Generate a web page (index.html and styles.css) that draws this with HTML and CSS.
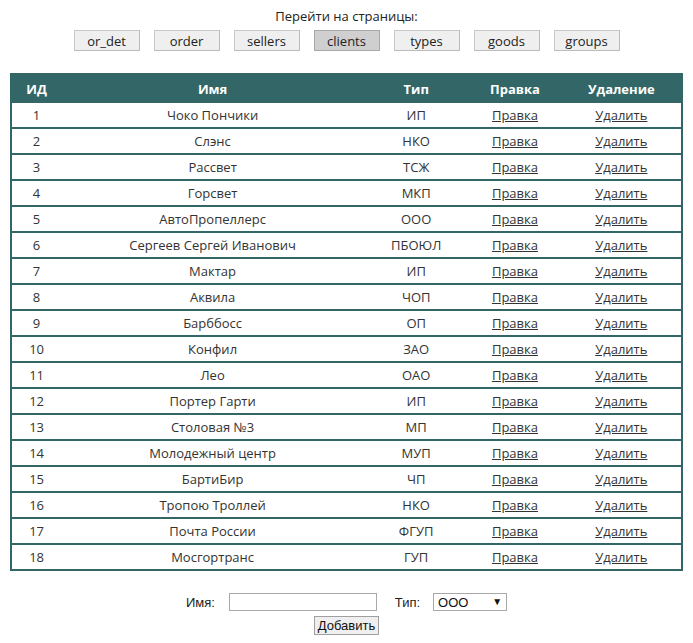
FILE: index.html
```html
<!DOCTYPE html>
<html>
<head>
<meta charset="utf-8">
<link rel="stylesheet" href="styles.css">
</head>
<body>
<div class="nav">
  <div class="nav-title">Перейти на страницы:</div>
  <div class="nav-buttons">
    <button class="nav-btn">or_det</button>
    <button class="nav-btn">order</button>
    <button class="nav-btn">sellers</button>
    <button class="nav-btn active">clients</button>
    <button class="nav-btn">types</button>
    <button class="nav-btn">goods</button>
    <button class="nav-btn">groups</button>
  </div>
</div>
<table class="grid">
  <colgroup>
    <col class="c-id"><col class="c-name"><col class="c-type"><col class="c-edit"><col class="c-del">
  </colgroup>
  <thead>
    <tr><th>ИД</th><th>Имя</th><th>Тип</th><th>Правка</th><th>Удаление</th></tr>
  </thead>
  <tbody>
    <tr><td>1</td><td>Чоко Пончики</td><td>ИП</td><td><a href="#">Правка</a></td><td><a href="#">Удалить</a></td></tr>
    <tr><td>2</td><td>Слэнс</td><td>НКО</td><td><a href="#">Правка</a></td><td><a href="#">Удалить</a></td></tr>
    <tr><td>3</td><td>Рассвет</td><td>ТСЖ</td><td><a href="#">Правка</a></td><td><a href="#">Удалить</a></td></tr>
    <tr><td>4</td><td>Горсвет</td><td>МКП</td><td><a href="#">Правка</a></td><td><a href="#">Удалить</a></td></tr>
    <tr><td>5</td><td>АвтоПропеллерс</td><td>ООО</td><td><a href="#">Правка</a></td><td><a href="#">Удалить</a></td></tr>
    <tr><td>6</td><td>Сергеев Сергей Иванович</td><td>ПБОЮЛ</td><td><a href="#">Правка</a></td><td><a href="#">Удалить</a></td></tr>
    <tr><td>7</td><td>Мактар</td><td>ИП</td><td><a href="#">Правка</a></td><td><a href="#">Удалить</a></td></tr>
    <tr><td>8</td><td>Аквила</td><td>ЧОП</td><td><a href="#">Правка</a></td><td><a href="#">Удалить</a></td></tr>
    <tr><td>9</td><td>Барббосс</td><td>ОП</td><td><a href="#">Правка</a></td><td><a href="#">Удалить</a></td></tr>
    <tr><td>10</td><td>Конфил</td><td>ЗАО</td><td><a href="#">Правка</a></td><td><a href="#">Удалить</a></td></tr>
    <tr><td>11</td><td>Лео</td><td>ОАО</td><td><a href="#">Правка</a></td><td><a href="#">Удалить</a></td></tr>
    <tr><td>12</td><td>Портер Гарти</td><td>ИП</td><td><a href="#">Правка</a></td><td><a href="#">Удалить</a></td></tr>
    <tr><td>13</td><td>Столовая №3</td><td>МП</td><td><a href="#">Правка</a></td><td><a href="#">Удалить</a></td></tr>
    <tr><td>14</td><td>Молодежный центр</td><td>МУП</td><td><a href="#">Правка</a></td><td><a href="#">Удалить</a></td></tr>
    <tr><td>15</td><td>БартиБир</td><td>ЧП</td><td><a href="#">Правка</a></td><td><a href="#">Удалить</a></td></tr>
    <tr><td>16</td><td>Тропою Троллей</td><td>НКО</td><td><a href="#">Правка</a></td><td><a href="#">Удалить</a></td></tr>
    <tr><td>17</td><td>Почта России</td><td>ФГУП</td><td><a href="#">Правка</a></td><td><a href="#">Удалить</a></td></tr>
    <tr><td>18</td><td>Мосгортранс</td><td>ГУП</td><td><a href="#">Правка</a></td><td><a href="#">Удалить</a></td></tr>
  </tbody>
</table>
<form class="add-form">
  <div class="form-row">
    <label class="lbl lbl-name">Имя:</label>
    <input class="inp" type="text">
    <label class="lbl lbl-type">Тип:</label>
    <div class="sel-wrap">
      <select class="sel"><option>ООО</option></select>
      <span class="sel-arrow">▼</span>
    </div>
  </div>
  <div class="form-submit">
    <button type="button" class="add-btn">Добавить</button>
  </div>
</form>
</body>
</html>
```
FILE: styles.css
```css
html, body {
  margin: 0;
  padding: 0;
  background: #fff;
}
body {
  font-family: "Open Sans", "Noto Sans", sans-serif;
  font-size: 13px;
  color: #333;
}
.nav {
  display: flex;
  flex-direction: column;
  align-items: center;
  padding-top: 7px;
}
.nav-title {
  font-size: 13px;
  line-height: 18px;
  color: #222;
}
.nav-buttons {
  display: flex;
  gap: 14px;
  margin-top: 5px;
}
.nav-btn {
  width: 66px;
  height: 21px;
  padding: 0;
  font-family: "Open Sans", "Noto Sans", sans-serif;
  font-size: 13px;
  color: #222;
  background: #efefef;
  border: 1px solid #c8c8c8;
  border-bottom-color: #bbb;
  border-right-color: #bbb;
}
.nav-btn.active {
  background: #cfcfcf;
  border-color: #a8a8a8;
}
.grid {
  width: 673px;
  margin: 22px auto 0;
  border-collapse: collapse;
  border: 2px solid #336666;
  table-layout: fixed;
}
.c-id { width: 50px; }
.c-name { width: 302px; }
.c-type { width: 104px; }
.c-edit { width: 93px; }
.c-del { width: 120px; }
.grid th {
  background: #336666;
  color: #fff;
  font-weight: bold;
  height: 28px;
  padding: 0;
  text-align: center;
}
.grid td {
  height: 24px;
  padding: 0;
  text-align: center;
  border-bottom: 2px solid #336666;
}
.grid td a {
  color: #333;
  text-decoration: underline;
}
.add-form {
  font-family: "Liberation Sans", Arial, sans-serif;
  font-size: 13px;
  color: #222;
  padding-top: 22px;
  display: flex;
  flex-direction: column;
  align-items: center;
}
.form-row {
  display: flex;
  align-items: center;
}
.lbl-name { margin-right: 14px; }
.lbl-type { margin-left: 18px; margin-right: 13px; }
.inp {
  width: 144px;
  height: 14px;
  padding: 1px;
  border: 1px solid #a9a9a9;
  margin: 0;
}
.sel-wrap {
  position: relative;
  width: 74px;
  height: 18px;
}
.sel {
  -webkit-appearance: none;
  appearance: none;
  width: 74px;
  height: 18px;
  padding: 0 0 0 4px;
  font-family: "Liberation Sans", Arial, sans-serif;
  font-size: 13px;
  color: #111;
  background: #fff;
  border: 1px solid #a9a9a9;
  border-radius: 0;
  margin: 0;
}
.sel-arrow {
  position: absolute;
  right: 5px;
  top: 4px;
  font-size: 10px;
  line-height: 10px;
  color: #111;
  pointer-events: none;
}
.form-submit {
  margin-top: 5px;
}
.add-btn {
  height: 19px;
  padding: 0 3px;
  font-family: "Liberation Sans", Arial, sans-serif;
  font-size: 13px;
  color: #111;
  background: #efefef;
  border: 1px solid #a0a0a0;
}
```
